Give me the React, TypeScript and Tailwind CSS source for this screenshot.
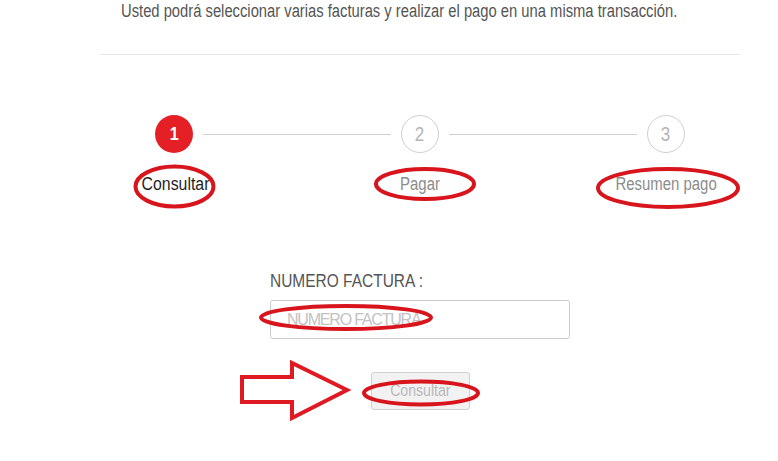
import React from 'react';

const font = "font-['Liberation_Sans',Arial,sans-serif]";

interface StepProps {
  num: number;
  label: string;
  active?: boolean;
}

// the page font is a condensed grotesque, so the Arial-width text is squeezed
const Step: React.FC<StepProps> = ({ num, label, active }) => (
  <div className="flex w-[38px] flex-col items-center">
    {active ? (
      <div className="flex h-[38px] w-[38px] items-center justify-center rounded-full bg-[#e41f26] text-[19px] font-bold text-white">
        <span className="inline-block scale-x-[0.85]">{num}</span>
      </div>
    ) : (
      <div className="flex h-[38px] w-[38px] items-center justify-center rounded-full border border-[#cfcfcf] bg-white text-[20px] text-[#b5b5b5]">
        <span className="inline-block scale-x-[0.85]">{num}</span>
      </div>
    )}
    <div
      className={`mt-[19px] whitespace-nowrap text-[18px] leading-6 ${
        active ? 'ml-[4px] text-[#1f1f1f]' : 'text-[#8c8c8c]'
      }`}
    >
      <span className={`inline-block ${active ? 'scale-x-[0.88]' : 'scale-x-[0.83]'}`}>{label}</span>
    </div>
  </div>
);

// red hand drawn marks lying over the page
const Annotations: React.FC = () => (
  <svg
    className="pointer-events-none absolute left-0 top-0"
    width="778"
    height="461"
    viewBox="0 0 778 461"
  >
    <g fill="none" stroke="#d8141d" strokeWidth="4">
      <ellipse cx="174.5" cy="186.5" rx="39" ry="20" />
      <ellipse cx="425" cy="184" rx="49" ry="15" />
      <ellipse cx="668" cy="188" rx="70" ry="19" />
      <ellipse cx="346" cy="317.5" rx="85" ry="11.5" />
      <ellipse cx="421" cy="393" rx="57" ry="11.5" />
    </g>
    <polygon
      points="242,377 292,377 292,363 347,390 292,418 292,402 242,402"
      fill="white"
      stroke="#e01a22"
      strokeWidth="4"
      strokeLinejoin="miter"
    />
  </svg>
);

export default function App() {
  return (
    <div className={`relative h-[461px] w-[778px] overflow-hidden bg-white ${font}`}>
      <div className="ml-[100px] w-[640px]">
        <p className="whitespace-nowrap pl-[21px] text-[18px] leading-[23px] text-[#555555]">
          <span className="inline-block origin-left scale-x-[0.82]">
            Usted podrá seleccionar varias facturas y realizar el pago en una misma transacción.
          </span>
        </p>
        <div className="mt-[31px] h-px bg-[#e6e6e6]" />

        <div className="mx-auto mt-[60px] flex w-[530px] items-start">
          <Step num={1} label="Consultar" active />
          <div className="mx-[10px] mt-[19px] h-px flex-1 bg-[#d0d0d0]" />
          <Step num={2} label="Pagar" />
          <div className="mx-[10px] mt-[19px] h-px flex-1 bg-[#d0d0d0]" />
          <Step num={3} label="Resumen pago" />
        </div>

        <div className="mx-auto mt-[73px] flex w-[300px] flex-col">
          <label className="whitespace-nowrap text-[18px] leading-6 text-[#555555]">
            <span className="inline-block origin-left scale-x-[0.86]">NUMERO FACTURA :</span>
          </label>
          <input
            type="text"
            placeholder="NUMERO FACTURA"
            className="mt-[7px] h-[39px] w-[300px] rounded-[3px] border border-[#cccccc] px-4 text-[16px] tracking-[-1.2px] text-[#555] outline-none placeholder:text-[#c2c2c2]"
          />
          <button
            type="button"
            disabled
            className="mx-auto mt-[33px] h-[38px] w-[99px] rounded-[3px] border border-[#d0d0d0] bg-[#f2f2f2] text-[17px] text-[#b8b8b8]"
          >
            <span className="inline-block scale-x-[0.83]">Consultar</span>
          </button>
        </div>
      </div>
      <Annotations />
    </div>
  );
}
